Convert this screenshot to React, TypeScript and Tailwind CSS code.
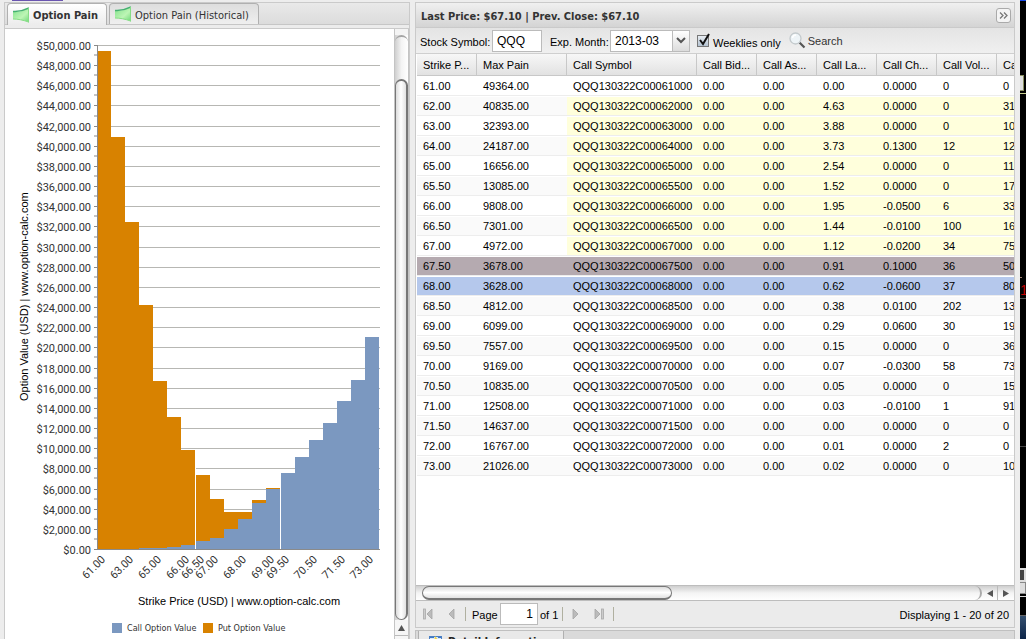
import { useState } from "react";

const rows = [
   ["61.00", "49364.00", "0.00", "0.0000", "0", "0"],
   ["62.00", "40835.00", "4.63", "0.0000", "0", "31"],
   ["63.00", "32393.00", "3.88", "0.0000", "0", "10"],
   ["64.00", "24187.00", "3.73", "0.1300", "12", "12"],
   ["65.00", "16656.00", "2.54", "0.0000", "0", "11"],
   ["65.50", "13085.00", "1.52", "0.0000", "0", "17"],
   ["66.00", "9808.00", "1.95", "-0.0500", "6", "33"],
   ["66.50", "7301.00", "1.44", "-0.0100", "100", "16"],
   ["67.00", "4972.00", "1.12", "-0.0200", "34", "75"],
   ["67.50", "3678.00", "0.91", "0.1000", "36", "50"],
   ["68.00", "3628.00", "0.62", "-0.0600", "37", "80"],
   ["68.50", "4812.00", "0.38", "0.0100", "202", "13"],
   ["69.00", "6099.00", "0.29", "0.0600", "30", "19"],
   ["69.50", "7557.00", "0.15", "0.0000", "0", "36"],
   ["70.00", "9169.00", "0.07", "-0.0300", "58", "73"],
   ["70.50", "10835.00", "0.05", "0.0000", "0", "15"],
   ["71.00", "12508.00", "0.03", "-0.0100", "1", "91"],
   ["71.50", "14637.00", "0.00", "0.0000", "0", "0"],
   ["72.00", "16767.00", "0.01", "0.0000", "2", "0"],
   ["73.00", "21026.00", "0.02", "0.0000", "0", "10"],
];

// call side of the total for the lower strikes, above 69.00 it is all calls
const callValues = [0, 0, 0, 130, 140, 210, 400, 750, 1140, 1940, 3000, 4540, 5970];

const columns = [
   { name: "Strike P...", width: "w-[60px]" },
   { name: "Max Pain", width: "w-[90px]" },
   { name: "Call Symbol", width: "w-[130px]" },
   { name: "Call Bid...", width: "w-[60px]" },
   { name: "Call As...", width: "w-[60px]" },
   { name: "Call La...", width: "w-[60px]" },
   { name: "Call Ch...", width: "w-[60px]" },
   { name: "Call Vol...", width: "w-[60px]" },
   { name: "Ca", width: "w-[60px]" },
];

const xLabels = [
   [0, "61.00"], [2, "63.00"], [4, "65.00"], [6, "66.00"], [7, "66.50"], [8, "67.00"],
   [10, "68.00"], [12, "69.00"], [13, "69.50"], [15, "70.50"], [17, "71.50"], [19, "73.00"],
] as [number, string][];

const barX = (i: number) => 97 + i * 14 + (i > 6 ? 1 : 0) + (i > 12 ? 1 : 0);
const valueY = (v: number) => Math.round(549 - (v * 504) / 50000);

function PainChart() {
   const ticks = Array.from({ length: 26 }, (_, i) => i * 2000);
   return (
      <svg width="389" height="610" viewBox="5 29 389 610" className="shrink-0 font-['DejaVu_Sans_Condensed','Noto_Sans',sans-serif]" role="img" aria-label="Option Pain">
         <g shapeRendering="crispEdges">
            {ticks.map((t) => (
               <g key={t}>
                  <rect x="97" y={valueY(t)} width="283" height="1" fill="#b7b7b3" />
                  <rect x="94" y={valueY(t)} width="4" height="1" fill="#8a8a8a" />
                  {t > 0 && <rect x="94" y={valueY(t - 1000) - 1} width="3" height="2" fill="#c4c4c4" />}
               </g>
            ))}
            {rows.map((r, i) => {
               const total = Number(r[1]);
               const call = i > 12 ? total : callValues[i];
               return (
                  <g key={r[0]}>
                     <rect x={barX(i)} y={valueY(total)} width="14" height={549 - valueY(total)} fill="#d88200" />
                     <rect x={barX(i)} y={valueY(call)} width="14" height={549 - valueY(call)} fill="#7b98c0" />
                  </g>
               );
            })}
            <rect x="195" y="450" width="1" height="99" fill="#fff" />
            <rect x="280" y="488" width="1" height="61" fill="#fff" />
            <rect x="97" y="45" width="1" height="505" fill="#8a8a8a" />
            <rect x="94" y="549" width="286" height="1" fill="#8a8a8a" />
         </g>
         {ticks.map((t) => (
            <text key={t} x="91" y={valueY(t) + 5} textAnchor="end" className="font-['Roboto',sans-serif] text-[11px]" fill="#333">
               ${t.toLocaleString("en-US")}.00
            </text>
         ))}
         {xLabels.map(([i, label]) => (
            <text key={label} transform={`translate(${barX(i) + 9} 560) rotate(-45)`} textAnchor="end" className="font-['Roboto',sans-serif] text-[11px]" fill="#333">
               {label}
            </text>
         ))}
         <text transform="translate(28 401) rotate(-90)" className="font-['Liberation_Sans',Arial,sans-serif] text-[11px]">
            Option Value (USD) | www.option-calc.com
         </text>
         <text x="138" y="605" className="font-['Liberation_Sans',Arial,sans-serif] text-[11px]">
            Strike Price (USD) | www.option-calc.com
         </text>
         <rect x="112" y="623" width="10" height="10" fill="#7b98c0" />
         <text x="127" y="631" className="text-[9px]" fill="#333">Call Option Value</text>
         <rect x="203" y="623" width="10" height="10" fill="#d88200" />
         <text x="218" y="631" className="text-[9px]" fill="#333">Put Option Value</text>
      </svg>
   );
}

function ChartIcon() {
   return (
      <svg width="16" height="16" viewBox="0 0 16 16" className="shrink-0">
         <defs>
            <linearGradient id="leaf" x1="0" y1="0" x2="1" y2="1">
               <stop offset="0" stopColor="#7fe08a" />
               <stop offset="0.6" stopColor="#bdf5b5" />
               <stop offset="1" stopColor="#6fd878" />
            </linearGradient>
         </defs>
         <path d="M0 5 C6 5 10 4 15 1 L16 15 C10 13 5 12 0 12 Z" fill="url(#leaf)" />
         <path d="M0 4.500 C6 5 10 4 16 1" fill="none" stroke="#45b071" strokeWidth="1.500" />
         <path d="M15.500 1 V15.500 M0 12 C5 12 10 13 15.500 15" fill="none" stroke="#86dc86" />
      </svg>
   );
}

function VerticalScrollbar() {
   return (
      <div className="flex w-[15px] shrink-0 flex-col border-x border-[#c4c4c4] bg-linear-to-r from-[#cfcfcf] via-[#f4f4f4] to-white">
         <div className="h-1.5 bg-[#f4f4f4]" />
         <div className="h-11 rounded-t-full border-t-2 border-[#a5a5a5]" />
         <div className="flex-1 rounded-full border border-t-2 border-r-2 border-[#777] bg-linear-to-r from-[#dcdcdc] via-white to-[#e2e2e2]" />
         <div className="flex h-4 items-center justify-center border-b border-[#bbb] bg-[#f6f6f6]">
            <svg width="7" height="6"><path d="M3.500 0 L7 6 H0 Z" fill="#555" /></svg>
         </div>
         <div className="h-[3px] bg-[#f6f6f6]" />
      </div>
   );
}

function PageButton({ label, flip, bar }: { label: string; flip?: boolean; bar?: boolean }) {
   return (
      <button aria-label={label} className="flex h-4 w-4 items-center justify-center">
         <svg width="12" height="12" viewBox="0 0 12 12" className={flip ? "-scale-x-100" : ""}>
            {bar && <rect x="1.500" y="1" width="2" height="10" fill="#ccc" stroke="#aaa" strokeWidth="0.800" />}
            <path d="M10 1 L5 6 L10 11 Z" fill="#bbb" stroke="#a4a4a4" strokeWidth="0.800" />
         </svg>
      </button>
   );
}

const Separator = () => <span className="h-3.5 w-px bg-[#b0b0a0]" />;

function rowColor(i: number) {
   if (i === 9) return "bg-[#b5aab0]";
   if (i === 10) return "bg-[#b5c8ec]";
   return i % 2 ? "bg-[#fafafa]" : "bg-white";
}

function OptionTable() {
   return (
      <div className="min-h-0 flex-1 overflow-hidden bg-white pl-px">
         <table className="w-[640px] table-fixed border-separate border-spacing-0 text-left">
            <thead>
               <tr className="h-[22px]">
                  {columns.map((c) => (
                     <th key={c.name} className={`${c.width} overflow-hidden border-r border-b border-[#c8c8c8] bg-linear-to-b from-[#f7f7f7] to-[#e2e2e2] px-1.5 pt-0.5 leading-[19px] font-normal whitespace-nowrap`}>
                        {c.name}
                     </th>
                  ))}
               </tr>
            </thead>
            <tbody>
               {rows.map(([strike, pain, last, change, volume, open], i) => {
                  const cells = [strike, pain, `QQQ130322C000${strike.replace(".", "")}0`, "0.00", "0.00", last, change, volume, open];
                  return (
                     <tr key={strike} className="h-5">
                        {cells.map((cell, j) => (
                           <td
                              key={j}
                              className={`overflow-hidden border-t border-t-white border-b border-b-[#ededed] px-1.5 leading-[18px] whitespace-nowrap ${
                                 j > 1 && i > 0 && i < 9 ? "bg-[#ffffdc]" : rowColor(i)
                              }`}
                           >
                              {cell}
                           </td>
                        ))}
                     </tr>
                  );
               })}
            </tbody>
         </table>
      </div>
   );
}

function HorizontalScrollbar() {
   return (
      <div className="flex h-4 shrink-0 border-y border-[#bdbdbd] bg-linear-to-b from-[#cfcfcf] via-[#f4f4f4] to-white pl-1.5">
         <div className="flex-1 rounded-r-full border-r-2 border-[#aaa]">
            <div className="h-3.5 w-[250px] rounded-full border border-b-2 border-[#777] bg-linear-to-b from-[#dcdcdc] via-white to-[#e2e2e2]" />
         </div>
         <div className="flex w-4 items-center justify-center border-r border-[#bbb]">
            <svg width="6" height="7"><path d="M0 3.500 L6 0 V7 Z" fill="#555" /></svg>
         </div>
         <div className="flex w-4 items-center justify-center">
            <svg width="6" height="7"><path d="M6 3.500 L0 0 V7 Z" fill="#555" /></svg>
         </div>
      </div>
   );
}

function Toolbar() {
   const [symbol, setSymbol] = useState("QQQ");
   const [weeklies, setWeeklies] = useState(true);
   return (
      <div className="flex h-[26px] shrink-0 items-center border-b border-[#cfcfcf] bg-linear-to-b from-[#e4e4e4] to-[#f0f0f0] pl-1">
         <label htmlFor="symbol" className="w-[72px] pt-1 whitespace-nowrap">Stock Symbol:</label>
         <input id="symbol" value={symbol} onChange={(e) => setSymbol(e.target.value)} className="h-[22px] w-[50px] border border-[#bbb] bg-white px-1 text-xs" />
         <label htmlFor="month" className="ml-2 w-[60px] pt-1 whitespace-nowrap">Exp. Month:</label>
         <div className="relative h-[22px] w-20">
            <select id="month" className="h-full w-full appearance-none border border-[#bbb] bg-white px-1 text-xs">
               <option>2013-03</option>
            </select>
            <span className="pointer-events-none absolute inset-y-0 right-0 flex w-[18px] items-center justify-center border border-[#bbb] bg-linear-to-b from-white to-[#dcdcdc]">
               <svg width="10" height="7"><path d="M1 1 L5 5 L9 1" fill="none" stroke="#555" strokeWidth="2" /></svg>
            </span>
         </div>
         <div className="relative ml-[7px] h-3 w-3">
            <input
               id="weeklies"
               type="checkbox"
               checked={weeklies}
               onChange={(e) => setWeeklies(e.target.checked)}
               className="block h-3 w-3 appearance-none border border-[#777] bg-linear-to-b from-[#e8edf2] to-[#b3c2d1]"
            />
            {weeklies && (
               <svg width="14" height="14" className="pointer-events-none absolute bottom-0 left-0">
                  <path d="M3 7 L6 11 L12 1" fill="none" stroke="#111" strokeWidth="2" />
               </svg>
            )}
         </div>
         <label htmlFor="weeklies" className="ml-1 pt-1.5 whitespace-nowrap">Weeklies only</label>
         <button className="ml-2 flex items-center gap-0.5 text-[#333]">
            <svg width="17" height="17" viewBox="0 0 17 17">
               <path d="M10.500 10.500 L15.500 15.500" stroke="#555" strokeWidth="2.200" />
               <circle cx="6.500" cy="6.500" r="5.500" fill="#eef4f7" stroke="#c3c9cc" strokeWidth="1.300" />
               <path d="M3.500 6 A3.500 3.500 0 0 1 7 3" fill="none" stroke="#fff" strokeWidth="1.500" />
            </svg>
            <span className="pt-0.5">Search</span>
         </button>
      </div>
   );
}

function Paging() {
   return (
      <div className="flex h-[27px] shrink-0 items-center border-b border-[#c8c8c8] bg-[#ebebeb] pr-[5px] pl-1">
         <PageButton label="First page" bar />
         <span className="w-[6px]" />
         <PageButton label="Previous page" />
         <span className="w-[7px]" />
         <Separator />
         <label htmlFor="page" className="ml-1.5 w-7 pt-0.5">Page</label>
         <input id="page" defaultValue="1" className="h-[22px] w-[38px] border border-[#bbb] bg-white px-1 text-right text-xs" />
         <span className="mr-1 ml-0.5 pt-0.5">of 1</span>
         <Separator />
         <span className="w-1.5" />
         <PageButton label="Next page" flip />
         <span className="w-1.5" />
         <PageButton label="Last page" flip bar />
         <span className="w-1.5" />
         <Separator />
         <span className="ml-auto pt-0.5">Displaying 1 - 20 of 20</span>
      </div>
   );
}

// sliver of the desktop showing behind the browser window
function DesktopEdge() {
   return (
      <div className="flex w-1.5 shrink-0 flex-col overflow-hidden bg-black">
         <div className="h-px bg-blue-700" />
         <div className="mt-[74px] mr-0.5 h-4 border border-l-0 border-[#8a8f60] bg-[#ddd]" />
         <div className="mt-0.5 h-px bg-[#c9cf90]" />
         <div className="mt-[183px] mr-1 h-px bg-[#a08070]" />
         <div className="mt-1 h-4 font-['Liberation_Sans',Arial,sans-serif] text-sm leading-4 text-[#c00000]">1</div>
         <div className="h-px bg-[#555]" />
         <div className="mt-[147px] h-px bg-[#444]" />
         <div className="mt-[121px] h-3.5 border-2 border-l-0 border-[#ddd] bg-[#444]" />
         <div className="h-3 border border-l-0 border-[#888] bg-[#ddd]" />
         <div className="mt-0.5 h-px bg-[#ddd]" />
         <div className="mt-[18px] flex-1 border-t border-[#666] bg-linear-to-b from-[#35506f] to-[#0c2448]" />
      </div>
   );
}

export default function App() {
   return (
      <main className="flex h-screen overflow-hidden bg-[#ededed] font-['Liberation_Sans',Arial,sans-serif] text-[11px] text-black">
         <div className="flex w-[410px] shrink-0 flex-col pl-1">
            <div className="h-0.5 shrink-0 pl-2">
               <div className="h-px w-[51px] bg-[#6a55b0]" />
            </div>
            <section className="flex min-h-0 flex-1 flex-col border border-b-0 border-[#cacaca] bg-white">
               <div className="shrink-0 border-b border-[#cacaca] bg-[#ececec] pb-[3px]">
                  <div className="flex h-[22px] items-end gap-0.5 border-b border-[#c6c6c6] bg-linear-to-b from-[#e9e9e9] to-[#dcdcdc] pl-0.5 font-['DejaVu_Sans_Condensed','Noto_Sans',sans-serif]">
                     <button className="-mb-px flex h-[22px] w-[100px] items-center gap-1 rounded-t-[4px] border border-b-0 border-[#b0b0b0] bg-linear-to-b from-white to-[#ececec] pl-[5px] font-bold whitespace-nowrap text-[#333]">
                        <ChartIcon />
                        <span className="pt-1">Option Pain</span>
                     </button>
                     <button className="flex h-[21px] w-[150px] items-center gap-1 rounded-t-[4px] border border-b-0 border-[#b0b0b0] bg-linear-to-b from-[#dedede] to-[#efefef] pl-[5px] whitespace-nowrap text-[#333]">
                        <ChartIcon />
                        <span className="pt-1">Option Pain (Historical)</span>
                     </button>
                  </div>
               </div>
               <div className="flex min-h-0 flex-1 justify-between overflow-hidden">
                  <PainChart />
                  <VerticalScrollbar />
               </div>
            </section>
         </div>

         <div className="flex min-w-0 flex-1 flex-col pt-0.5 pr-[5px] pl-[5px]">
            <section className="flex min-h-0 flex-1 flex-col border border-b-0 border-[#cacaca]">
               <header className="flex h-[25px] shrink-0 items-center justify-between border-b border-[#cacaca] bg-linear-to-b from-[#f0f0f0] to-[#d4d4d4] pr-[3px] pl-[5px]">
                  <h1 className="pt-1 font-['DejaVu_Sans_Condensed','Noto_Sans',sans-serif] font-bold text-[#333]">Last Price: $67.10 | Prev. Close: $67.10</h1>
                  <button aria-label="Collapse" className="flex h-[15px] w-[15px] items-center justify-center rounded-[3px] border border-[#aaa] bg-[#f4f4f4]">
                     <svg width="9" height="7" viewBox="0 0 9 7">
                        <path d="M1 0.500 L4 3.500 L1 6.500 M5 0.500 L8 3.500 L5 6.500" fill="none" stroke="#777" strokeWidth="1.300" />
                     </svg>
                  </button>
               </header>
               <Toolbar />
               <OptionTable />
               <HorizontalScrollbar />
               <Paging />
            </section>
            <section className="mt-0.5 flex h-[9px] shrink-0 items-start overflow-hidden border-x border-t border-[#c0c0c0] bg-[#dadada] pl-0.5">
               <button className="flex h-[22px] w-[146px] items-center gap-1.5 border-x border-[#b0b0b0] bg-[#e9e9e9] pl-2.5 font-['DejaVu_Sans_Condensed','Noto_Sans',sans-serif] font-bold whitespace-nowrap text-[#222]">
                  <svg width="13" height="12" viewBox="0 0 13 12">
                     <rect x="0.500" y="0.500" width="12" height="11" fill="#dbe9f8" stroke="#4a7fc4" />
                     <path d="M1 1.500 H5 M9 1.500 H12" stroke="#3c78c8" />
                     <path d="M6 0 L9 4 L5 6 Z" fill="#f2d443" />
                  </svg>
                  Detail Information
               </button>
            </section>
         </div>
         <DesktopEdge />
      </main>
   );
}
